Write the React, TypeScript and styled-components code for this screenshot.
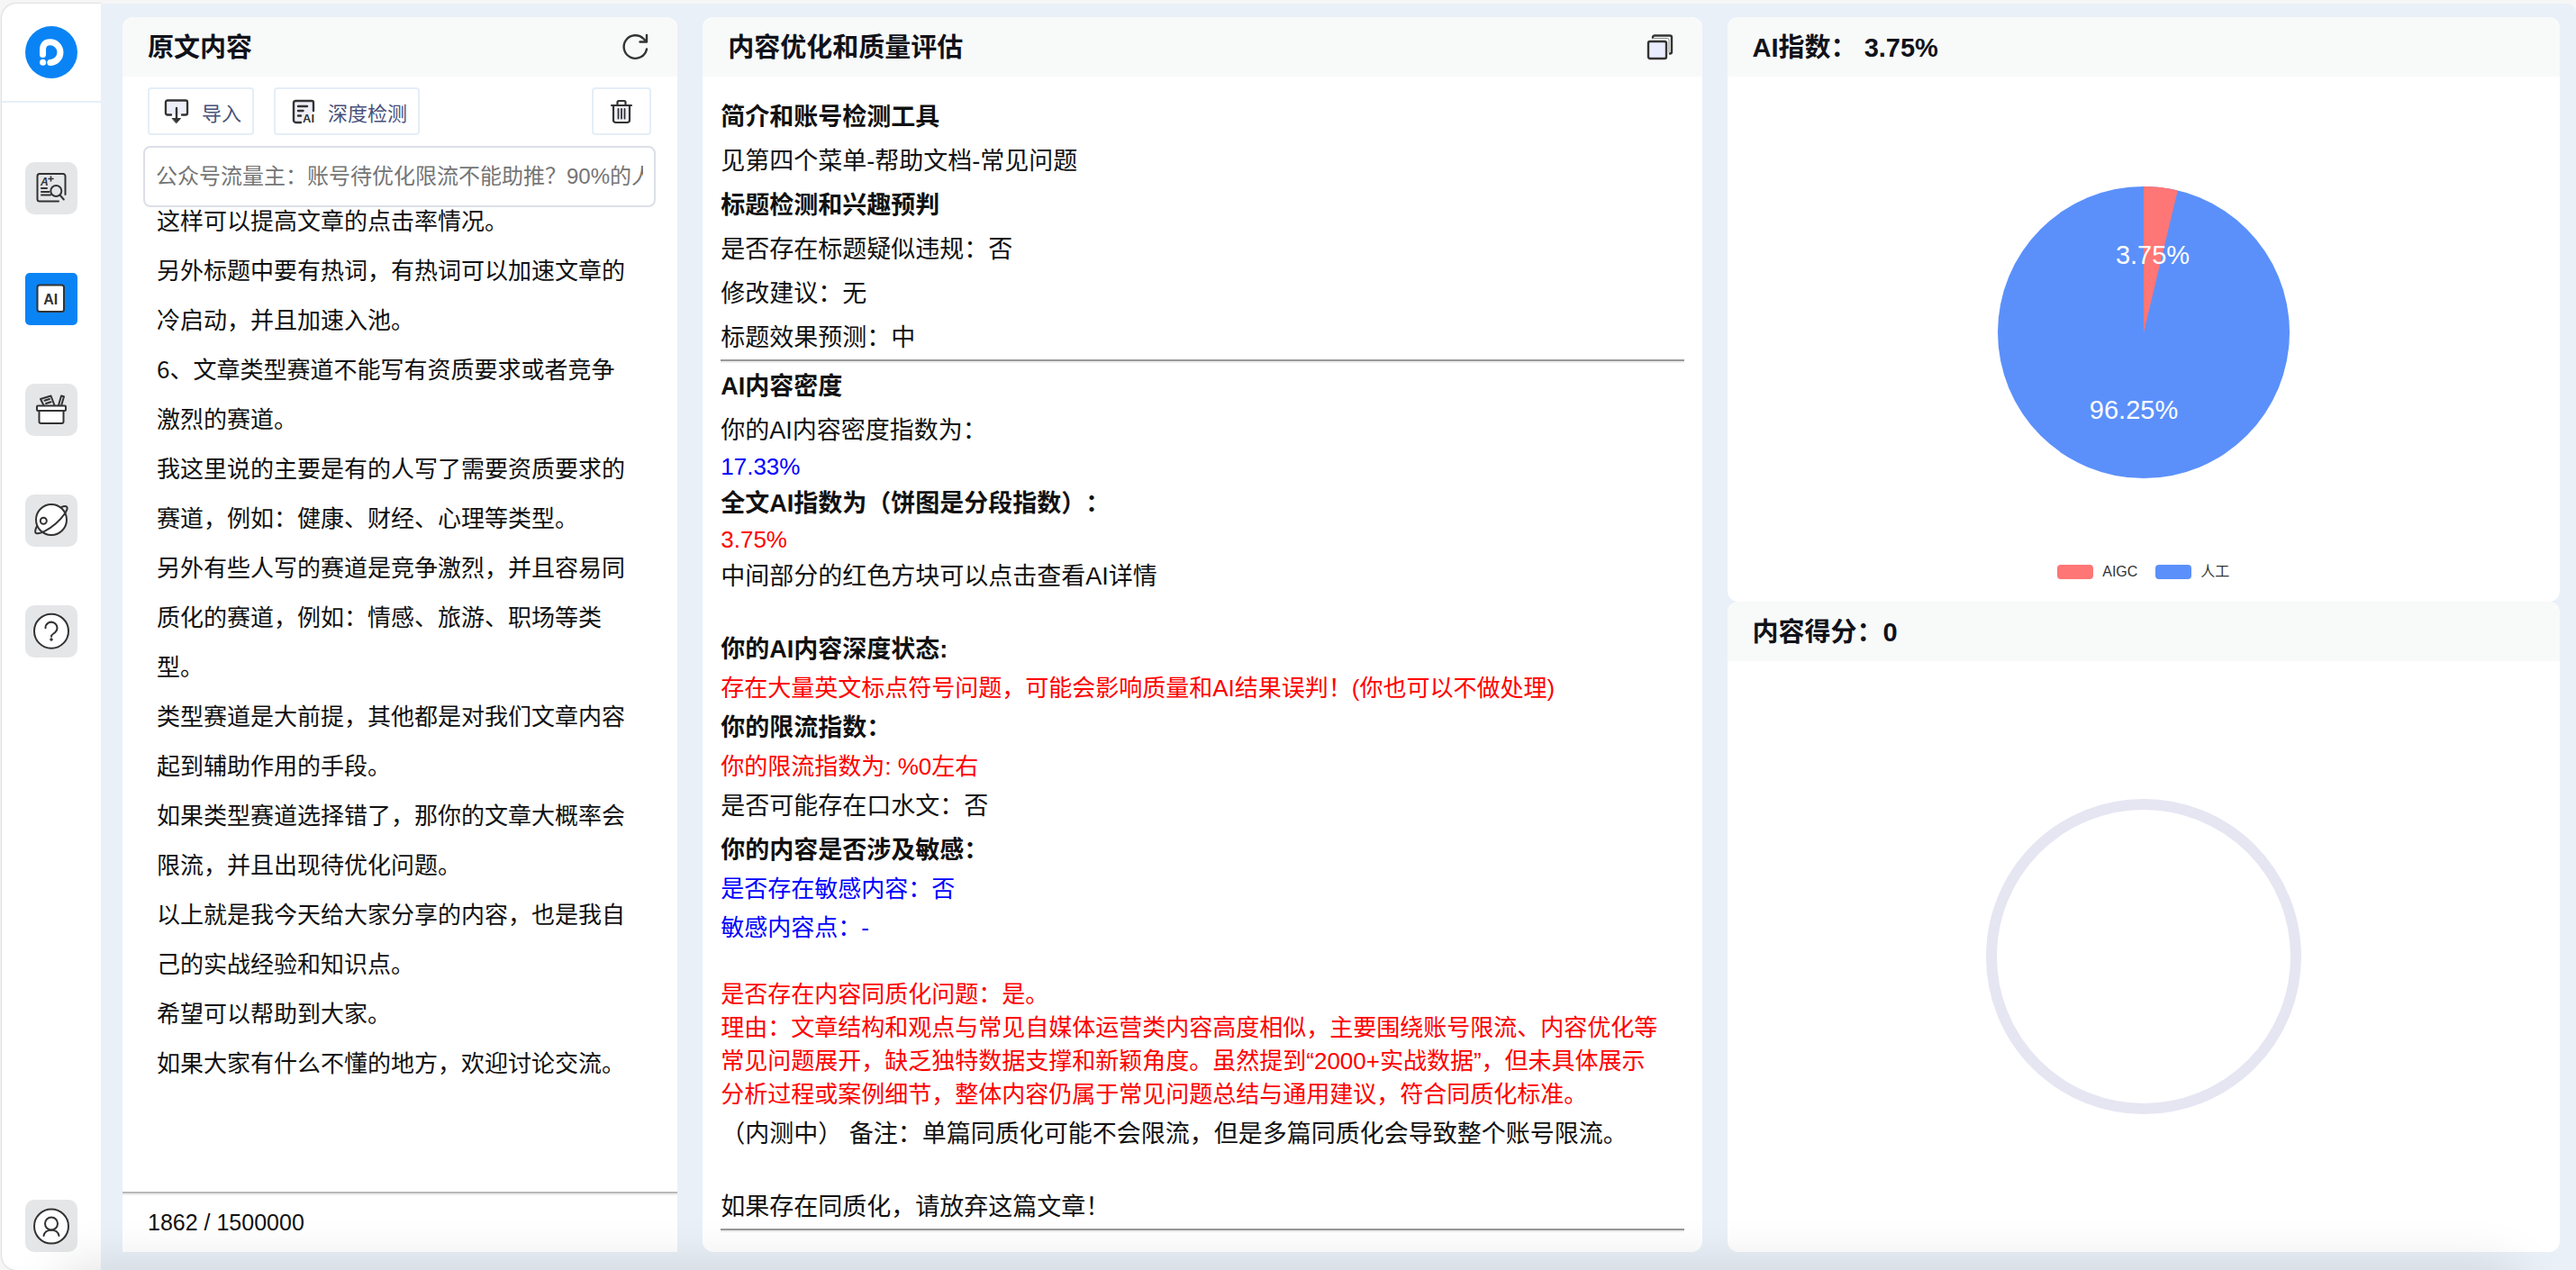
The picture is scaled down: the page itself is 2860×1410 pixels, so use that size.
import React from "react";
import styled, { createGlobalStyle, css } from "styled-components";

const ink = "#333333";

const GlobalStyle = createGlobalStyle`
  *, *::before, *::after { box-sizing: border-box; }
  body {
    margin: 0;
    background: #f6f6f6;
    color: #111111;
    font-family: "Liberation Sans", "Noto Sans CJK SC", sans-serif;
    text-spacing-trim: space-all;
  }
  button, input, textarea { font-family: inherit; margin: 0; }
  h2, h3, p { margin: 0; }
`;

const Shell = styled.div`
  display: flex;
  min-height: 100vh;
  padding: 4px 0 0 2px;
`;

const Sidebar = styled.aside`
  display: flex;
  flex-direction: column;
  align-items: center;
  flex: none;
  width: 110px;
  padding-bottom: 20px;
  background: #ffffff;
  border-radius: 16px 0 0 16px;
  box-shadow: 0 0 2px rgba(0, 0, 0, 0.3);
`;

const LogoArea = styled.div`
  display: flex;
  justify-content: center;
  width: 100%;
  padding: 25px 0;
  border-bottom: 2px solid #e7f0f8;
`;

const NavList = styled.nav`
  display: flex;
  flex-direction: column;
  flex: 1;
  gap: 65px;
  padding-top: 66px;
`;

const NavButton = styled.button<{ $active?: boolean }>`
  display: block;
  width: 58px;
  height: 58px;
  padding: 0;
  border: 0;
  border-radius: ${(p) => (p.$active ? 5 : 10)}px;
  background: ${(p) => (p.$active ? "#0a84f5" : "#e5e6e8")};
  cursor: pointer;

  svg { display: block; }
`;

const Workspace = styled.main`
  display: grid;
  grid-template-columns: 20fr 36fr 30fr;
  gap: 28px;
  flex: 1;
  min-width: 0;
  padding: 15px 18px 20px 24px;
  background: #e9f0f8;
  border-top-right-radius: 10px;
`;

const Panel = styled.section<{ $square?: boolean }>`
  display: flex;
  flex-direction: column;
  min-width: 0;
  background: #ffffff;
  border-radius: ${(p) => (p.$square ? "12px 12px 0 0" : "12px")};
`;

const PanelHeader = styled.header`
  display: flex;
  align-items: center;
  justify-content: space-between;
  flex: none;
  height: 66px;
  padding: 0 31px 0 28px;
  background: #f8faf9;
  border-radius: 14px 14px 0 0;
`;

const PanelTitle = styled.h2`
  padding-top: 2px;
  font-size: 29px;
  line-height: 40px;
  font-weight: 600;
  color: #10121a;
`;

const IconButton = styled.button`
  display: flex;
  padding: 0;
  border: 0;
  background: transparent;
  cursor: pointer;
`;

const Toolbar = styled.div`
  display: flex;
  gap: 22px;
  padding: 12px 29px 12px 28px;
`;

const ToolButton = styled.button<{ $end?: boolean }>`
  display: flex;
  align-items: center;
  gap: 14px;
  height: 53px;
  padding: 0 12px 0 16px;
  border: 2px solid #e4eef7;
  border-radius: 4px;
  background: #ffffff;
  color: #48507a;
  font-size: 22px;
  white-space: nowrap;
  cursor: pointer;
  ${(p) =>
    p.$end &&
    css`
      margin-left: auto;
      padding: 0 17px;
    `}
`;

const TitleInput = styled.input`
  position: relative;
  flex: none;
  height: 68px;
  margin: 0 24px 0 23px;
  padding: 0 12px;
  border: 2px solid #dcdfe8;
  border-radius: 8px;
  background: #ffffff;
  font-size: 24px;
  outline: none;

  &::placeholder { color: #757575; opacity: 1; }
`;

const ArticleInput = styled.textarea`
  flex: 1;
  min-height: 1010px;
  margin-top: -14px;
  padding: 0 46px 0 38px;
  border: 0;
  outline: none;
  resize: none;
  overflow: hidden;
  background: transparent;
  color: #111111;
  font-family: "Noto Sans CJK SC", sans-serif;
  font-size: 26px;
  line-height: 55px;
`;

const WordCount = styled.footer`
  flex: none;
  padding: 0 28px;
  border-top: 2px solid #b9b9b9;
  box-shadow: inset 0 2px 0 #eeeeee;
  font-size: 25px;
  line-height: 65px;
`;

const Report = styled.div`
  padding: 20px 20px 0;
`;

const reportLine = css`
  padding-top: 2px;
  font-size: 27px;
  line-height: 47px;
`;

const ReportHeading = styled.h3`
  ${reportLine}
  font-weight: 600;
`;

const ReportText = styled.p`
  ${reportLine}
`;

const Verdict = styled.p<{ $tone: "red" | "blue"; $line?: number }>`
  font-size: 26px;
  line-height: ${(p) => p.$line ?? 38}px;
  color: ${(p) => (p.$tone === "red" ? "#ff0000" : "#0000ff")};
`;

const Reason = styled(Verdict)`
  padding-right: 24px;
`;

const VerdictGroup = styled.div`
  display: flex;
  flex-direction: column;
  gap: 5px;
`;

const Blank = styled.div`
  height: 32px;
`;

const Rule = styled.hr`
  height: 4px;
  margin: 0 0 1px;
  border: 0;
  border-top: 2px solid #999999;
  background: #eeeeee;
`;

const ScoreColumn = styled.div`
  display: grid;
  grid-template-rows: 9fr 10fr;
  min-width: 0;
`;

const ChartArea = styled.div`
  display: flex;
  flex-direction: column;
  align-items: center;
  justify-content: space-between;
  flex: 1;
  padding: 122px 0 24px;
`;

const Legend = styled.ul`
  display: flex;
  gap: 20px;
  margin: 0;
  padding: 0;
  list-style: none;
`;

const LegendItem = styled.li`
  display: flex;
  align-items: center;
  gap: 10px;
  font-size: 16px;
  line-height: 18px;
  color: #333333;
`;

const Swatch = styled.span<{ $color: string }>`
  width: 40px;
  height: 16px;
  border-radius: 4px;
  background: ${(p) => p.$color};
`;

const RingArea = styled.div`
  display: flex;
  align-items: center;
  justify-content: center;
  flex: 1;
`;

const Ring = styled.div`
  width: 350px;
  height: 350px;
  border: 12px solid #e6e5f2;
  border-radius: 50%;
`;

const BottomShade = styled.div`
  position: fixed;
  top: 100%;
  left: 70px;
  right: 70px;
  height: 60px;
  box-shadow: 0 0 60px rgba(0, 0, 0, 0.14);
  pointer-events: none;
`;

const NavSvg = ({ children }: { children: React.ReactNode }) => (
  <svg
    width="58"
    height="58"
    viewBox="0 0 58 58"
    fill="none"
    stroke={ink}
    strokeWidth="2"
    strokeLinecap="round"
    strokeLinejoin="round"
    aria-hidden="true"
  >
    {children}
  </svg>
);

const Logo = () => (
  <svg width="58" height="58" viewBox="0 0 58 58" fill="none" role="img" aria-label="Logo">
    <circle cx="29" cy="29" r="29" fill="#0a84f5" />
    <path
      d="M19.5 31.5V26Q19.5 17.8 27.5 17.8A11.3 11.3 0 0 1 27.8 40.4"
      stroke="#fff"
      strokeWidth="7"
      strokeLinecap="round"
    />
    <circle cx="19.6" cy="40.3" r="3.5" fill="#fff" />
  </svg>
);

const DocSearchIcon = () => (
  <NavSvg>
    <path d="M37 43.5H16a2.5 2.5 0 0 1-2.5-2.5V15.5A2.5 2.5 0 0 1 16 13h26a2.5 2.5 0 0 1 2.5 2.5V36" />
    <text x="17" y="25.5" fontSize="12" fontWeight="700" fontStyle="italic" fill={ink} stroke="none">A</text>
    <path d="M26 18.5h5M28.5 16v5" strokeWidth="1.6" />
    <path d="M18 29h6M18 33h8.5M18 36.5h10" />
    <circle cx="34.3" cy="32" r="6" />
    <path d="M38.5 36.5l4.3 5" />
  </NavSvg>
);

const AiIcon = () => (
  <NavSvg>
    <rect x="13.5" y="13.5" width="29.5" height="29.5" rx="2.5" fill="#fff" />
    <text x="28.3" y="34.5" textAnchor="middle" fontSize="16" fontWeight="700" fill={ink} stroke="none">AI</text>
  </NavSvg>
);

const ToolboxIcon = () => (
  <NavSvg>
    <path d="M20.5 24l-3.5-7 11.5-3.5 4 10.5M21.5 18.8l5.5-1.8M23 22l5.5-1.8" />
    <path d="M37 24l3-10.5 3 .8-2.8 9.7" />
    <rect x="13" y="24.5" width="32" height="5.5" rx="1" fill="#fff" />
    <path d="M15.5 30v12a2 2 0 0 0 2 2h23a2 2 0 0 0 2-2V30z" fill="#fff" />
  </NavSvg>
);

const PlanetIcon = () => (
  <NavSvg>
    <circle cx="29" cy="28" r="17" fill="#fff" />
    <circle cx="20.3" cy="29.3" r="3.5" />
    <path d="M12.8 35.5C11 39.5 10.3 42.3 12.3 43c4 1.2 14-4 22-11 7.5-6.5 13-15 12.3-17.5-.6-2-3.8-1.7-6.8-.2" />
  </NavSvg>
);

const HelpIcon = () => (
  <NavSvg>
    <circle cx="29" cy="28.7" r="19" fill="#fff" />
    <path d="M22.5 25.3a6.5 6.5 0 1 1 10.5 5c-2.5 1.7-4 2.3-4 4.5" />
    <circle cx="29" cy="38" r="0.8" fill={ink} />
  </NavSvg>
);

const UserIcon = () => (
  <NavSvg>
    <circle cx="29" cy="29.5" r="19" fill="#fff" />
    <circle cx="29" cy="26.5" r="7" />
    <path d="M20.5 40c.8-4 4-6.3 8.5-6.3s7.700 2.300 8.500 6.300" />
  </NavSvg>
);

const ToolSvg = ({ children, size = 28 }: { children: React.ReactNode; size?: number }) => (
  <svg
    width={size}
    height={size}
    viewBox={`0 0 ${size} ${size}`}
    fill="none"
    stroke={ink}
    strokeWidth="2.4"
    strokeLinecap="round"
    strokeLinejoin="round"
    aria-hidden="true"
  >
    {children}
  </svg>
);

const ImportIcon = () => (
  <ToolSvg>
    <path d="M4 3h20v14H4z" fill="#eeeef8" stroke="none" />
    <path d="M8 17.5H4A2 2 0 0 1 2 15.5V3.5a2 2 0 0 1 2-2h20a2 2 0 0 1 2 2v12a2 2 0 0 1-2 2h-4M14 10v12" />
    <path d="M9.5 21.5h9L14 26.5z" fill={ink} strokeWidth="1" />
  </ToolSvg>
);

const DeepCheckIcon = () => (
  <ToolSvg>
    <path d="M5 3h20v12l-13 11H5z" fill="#eeeef8" stroke="none" />
    <path d="M12 26H6.5a2.5 2.5 0 0 1-2.5-2.5V4.5A2.5 2.5 0 0 1 6.5 2H24a2 2 0 0 1 2 2v9M9 8h10M9 13h5.5M9 18.5h3" />
    <text x="14" y="26" fontSize="13" fontWeight="700" fill={ink} stroke="none">AI</text>
  </ToolSvg>
);

const TrashIcon = () => (
  <ToolSvg>
    <path d="M5 7h18v18H5z" fill="#eeeef8" stroke="none" />
    <path
      d="M3 7h22M9.5 7V3.5a1.5 1.5 0 0 1 1.5-1.5h6a1.5 1.5 0 0 1 1.5 1.5V7M5 7v16.5a2.5 2.5 0 0 0 2.5 2.5h13a2.5 2.5 0 0 0 2.5-2.5V7"
      strokeWidth="2.2"
    />
    <path d="M10.5 11v10.5M14 11v10.5M17.5 11v10.5" strokeWidth="1.8" />
  </ToolSvg>
);

const RefreshIcon = () => (
  <ToolSvg size={32}>
    <path d="M29 18.5A12.8 12.8 0 1 1 25.5 7l3 3M29 3v7.5h-7.5" />
  </ToolSvg>
);

const CopyIcon = () => (
  <ToolSvg size={32}>
    <rect x="3" y="10" width="20" height="19" rx="2" fill="#e8ecfc" />
    <path d="M8 6V5.5a2 2 0 0 1 2-2h17a2 2 0 0 1 2 2v16a2 2 0 0 1-2 2" />
    <path d="M8 6.5h16a2 2 0 0 1 2 2V22" strokeWidth="1" stroke="#8a8a8a" />
  </ToolSvg>
);

const chart = { red: "#ff7676", blue: "#5b90fb" };

const PieChart = ({ share }: { share: number }) => {
  const r = 162;
  const angle = (share / 100) * Math.PI * 2;
  const x = r + r * Math.sin(angle);
  const y = r - r * Math.cos(angle);
  return (
    <svg width="324" height="324" viewBox="0 0 324 324" role="img" aria-label="AI指数饼图">
      <circle cx={r} cy={r} r={r} fill={chart.blue} />
      <path d={`M${r} ${r}V0A${r} ${r} 0 0 1 ${x} ${y}Z`} fill={chart.red} />
      <g fill="#fff" fontSize="29" textAnchor="middle">
        <text x="172" y="86">3.75%</text>
        <text x="151" y="258">96.25%</text>
      </g>
    </svg>
  );
};

const navItems = [
  { label: "文章检测", icon: <DocSearchIcon /> },
  { label: "AI检测", icon: <AiIcon />, active: true },
  { label: "工具箱", icon: <ToolboxIcon /> },
  { label: "发现", icon: <PlanetIcon /> },
  { label: "帮助文档", icon: <HelpIcon /> },
];

const article = [
  "这样可以提高文章的点击率情况。",
  "另外标题中要有热词，有热词可以加速文章的冷启动，并且加速入池。",
  "6、文章类型赛道不能写有资质要求或者竞争激烈的赛道。",
  "我这里说的主要是有的人写了需要资质要求的赛道，例如：健康、财经、心理等类型。",
  "另外有些人写的赛道是竞争激烈，并且容易同质化的赛道，例如：情感、旅游、职场等类型。",
  "类型赛道是大前提，其他都是对我们文章内容起到辅助作用的手段。",
  "如果类型赛道选择错了，那你的文章大概率会限流，并且出现待优化问题。",
  "以上就是我今天给大家分享的内容，也是我自己的实战经验和知识点。",
  "希望可以帮助到大家。",
  "如果大家有什么不懂的地方，欢迎讨论交流。",
].join("\n");

export default function App() {
  return (
    <>
      <GlobalStyle />
      <Shell>
        <Sidebar>
          <LogoArea>
            <Logo />
          </LogoArea>
          <NavList>
            {navItems.map((item) => (
              <NavButton key={item.label} type="button" aria-label={item.label} $active={item.active}>
                {item.icon}
              </NavButton>
            ))}
          </NavList>
          <NavButton type="button" aria-label="个人中心">
            <UserIcon />
          </NavButton>
        </Sidebar>

        <Workspace>
          <Panel $square>
            <PanelHeader>
              <PanelTitle>原文内容</PanelTitle>
              <IconButton type="button" aria-label="刷新">
                <RefreshIcon />
              </IconButton>
            </PanelHeader>
            <Toolbar>
              <ToolButton type="button">
                <ImportIcon />
                导入
              </ToolButton>
              <ToolButton type="button">
                <DeepCheckIcon />
                深度检测
              </ToolButton>
              <ToolButton type="button" aria-label="清空" $end>
                <TrashIcon />
              </ToolButton>
            </Toolbar>
            <TitleInput
              type="text"
              aria-label="标题"
              placeholder="公众号流量主：账号待优化限流不能助推？90%的人"
            />
            <ArticleInput aria-label="正文" defaultValue={article} spellCheck={false} />
            <WordCount>1862 / 1500000</WordCount>
          </Panel>

          <Panel>
            <PanelHeader>
              <PanelTitle>内容优化和质量评估</PanelTitle>
              <IconButton type="button" aria-label="复制">
                <CopyIcon />
              </IconButton>
            </PanelHeader>
            <Report>
              <ReportHeading>简介和账号检测工具</ReportHeading>
              <ReportText>见第四个菜单-帮助文档-常见问题</ReportText>
              <ReportHeading>标题检测和兴趣预判</ReportHeading>
              <ReportText>是否存在标题疑似违规：否</ReportText>
              <ReportText>修改建议：无</ReportText>
              <ReportText>标题效果预测：中</ReportText>
              <Rule />
              <ReportHeading>AI内容密度</ReportHeading>
              <ReportText>你的AI内容密度指数为：</ReportText>
              <Verdict $tone="blue" $line={32}>17.33%</Verdict>
              <ReportHeading>全文AI指数为（饼图是分段指数）：</ReportHeading>
              <Verdict $tone="red" $line={32}>3.75%</Verdict>
              <ReportText>中间部分的红色方块可以点击查看AI详情</ReportText>
              <Blank />
              <ReportHeading>你的AI内容深度状态:</ReportHeading>
              <Verdict $tone="red">
                存在大量英文标点符号问题，可能会影响质量和AI结果误判！(你也可以不做处理)
              </Verdict>
              <ReportHeading>你的限流指数：</ReportHeading>
              <Verdict $tone="red">你的限流指数为: %0左右</Verdict>
              <ReportText>是否可能存在口水文：否</ReportText>
              <ReportHeading>你的内容是否涉及敏感：</ReportHeading>
              <VerdictGroup>
                <Verdict $tone="blue">是否存在敏感内容：否</Verdict>
                <Verdict $tone="blue">敏感内容点：-</Verdict>
                <Blank />
              </VerdictGroup>
              <Verdict $tone="red" $line={37}>是否存在内容同质化问题：是。</Verdict>
              <Reason $tone="red" $line={37}>
                理由：文章结构和观点与常见自媒体运营类内容高度相似，主要围绕账号限流、内容优化等常见问题展开，缺乏独特数据支撑和新颖角度。虽然提到“2000+实战数据”，但未具体展示分析过程或案例细节，整体内容仍属于常见问题总结与通用建议，符合同质化标准。
              </Reason>
              <ReportText>（内测中） 备注：单篇同质化可能不会限流，但是多篇同质化会导致整个账号限流。</ReportText>
              <Blank />
              <ReportText>如果存在同质化，请放弃这篇文章！</ReportText>
              <Rule />
            </Report>
          </Panel>

          <ScoreColumn>
            <Panel>
              <PanelHeader>
                <PanelTitle>AI指数： 3.75%</PanelTitle>
              </PanelHeader>
              <ChartArea>
                <PieChart share={3.75} />
                <Legend>
                  <LegendItem>
                    <Swatch $color={chart.red} />
                    AIGC
                  </LegendItem>
                  <LegendItem>
                    <Swatch $color={chart.blue} />
                    人工
                  </LegendItem>
                </Legend>
              </ChartArea>
            </Panel>
            <Panel>
              <PanelHeader>
                <PanelTitle>内容得分：0</PanelTitle>
              </PanelHeader>
              <RingArea>
                <Ring role="img" aria-label="内容得分 0" />
              </RingArea>
            </Panel>
          </ScoreColumn>
        </Workspace>
      </Shell>
      <BottomShade />
    </>
  );
}
